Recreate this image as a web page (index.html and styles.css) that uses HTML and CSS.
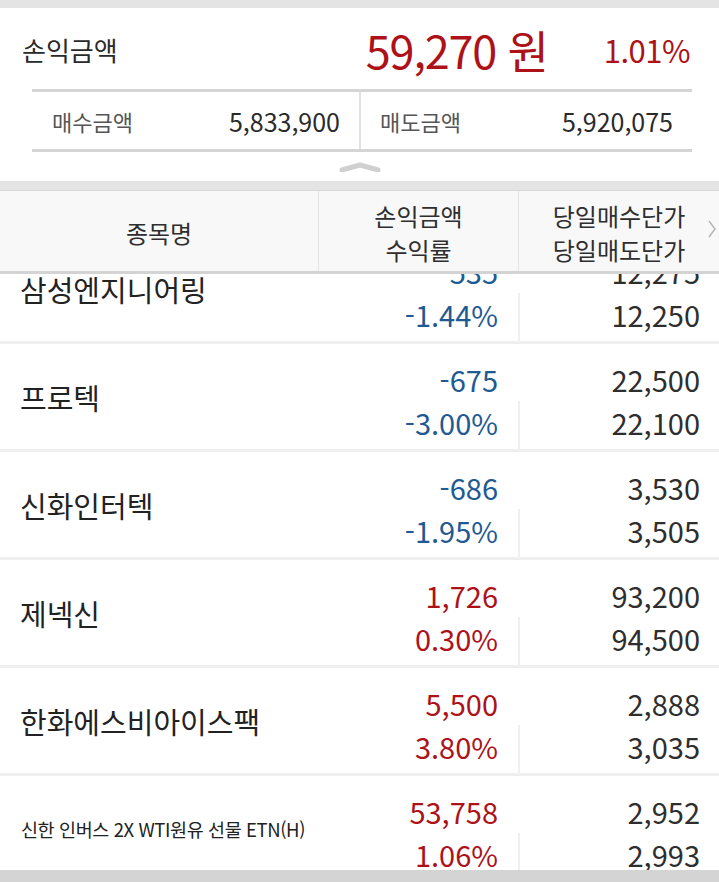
FILE: index.html
```html
<!DOCTYPE html>
<html lang="ko">
<head>
<meta charset="utf-8">
<link rel="stylesheet" href="styles.css">
</head>
<body>
<div class="top-band"></div>
<section class="summary">
  <div class="total">
    <span class="total-label">손익금액</span>
    <span class="total-amount">59,270 원</span>
    <span class="total-pct">1.01%</span>
  </div>
  <div class="sub">
    <div class="sub-cell left"><span class="sub-label">매수금액</span><span class="sub-value">5,833,900</span></div>
    <div class="sub-cell"><span class="sub-label">매도금액</span><span class="sub-value">5,920,075</span></div>
  </div>
  <div class="handle">
    <svg width="42" height="10" viewBox="0 0 42 10"><path d="M3 8 L21 3 L39 8" fill="none" stroke="#cfcfcf" stroke-width="5" stroke-linecap="round" stroke-linejoin="round"/></svg>
  </div>
</section>
<div class="mid-band"></div>
<div class="thead">
  <div class="th th-name">종목명</div>
  <div class="th th-mid"><span>손익금액</span><span>수익률</span></div>
  <div class="th th-last"><span>당일매수단가</span><span>당일매도단가</span>
    <svg class="more" width="10" height="20" viewBox="0 0 10 20"><path d="M2 2 L8 10 L2 18" fill="none" stroke="#b5b5b5" stroke-width="1.5"/></svg>
  </div>
</div>
<div class="list">
  <div class="list-inner">
    <div class="row">
      <div class="name">삼성엔지니어링</div>
      <div class="col2"><div class="l1 blue">-535</div><div class="l2 blue">-1.44%</div></div>
      <div class="col3"><div class="l1">12,275</div><div class="l2">12,250</div></div>
    </div>
    <div class="row">
      <div class="name">프로텍</div>
      <div class="col2"><div class="l1 blue">-675</div><div class="l2 blue">-3.00%</div></div>
      <div class="col3"><div class="l1">22,500</div><div class="l2">22,100</div></div>
    </div>
    <div class="row">
      <div class="name">신화인터텍</div>
      <div class="col2"><div class="l1 blue">-686</div><div class="l2 blue">-1.95%</div></div>
      <div class="col3"><div class="l1">3,530</div><div class="l2">3,505</div></div>
    </div>
    <div class="row">
      <div class="name">제넥신</div>
      <div class="col2"><div class="l1 red">1,726</div><div class="l2 red">0.30%</div></div>
      <div class="col3"><div class="l1">93,200</div><div class="l2">94,500</div></div>
    </div>
    <div class="row">
      <div class="name">한화에스비아이스팩</div>
      <div class="col2"><div class="l1 red">5,500</div><div class="l2 red">3.80%</div></div>
      <div class="col3"><div class="l1">2,888</div><div class="l2">3,035</div></div>
    </div>
    <div class="row">
      <div class="name small">신한 인버스 2X WTI원유 선물 ETN(H)</div>
      <div class="col2"><div class="l1 red">53,758</div><div class="l2 red">1.06%</div></div>
      <div class="col3"><div class="l1">2,952</div><div class="l2">2,993</div></div>
    </div>
  </div>
</div>
<div class="bottom-band"></div>
</body>
</html>
```
FILE: styles.css
```css
* { box-sizing: border-box; }
html, body { margin: 0; padding: 0; }
body {
  width: 719px;
  height: 882px;
  overflow: hidden;
  background: #fff;
  font-family: "Noto Sans CJK KR", "Noto Sans", sans-serif;
  color: #2a2a2a;
}
.top-band { height: 8px; background: #e4e4e4; }
.summary { background: #fff; height: 173px; }
.total {
  display: flex;
  align-items: center;
  height: 81px;
  padding: 2px 29px 0 22px;
}
.total-label { flex: 1; font-size: 26px; color: #2a2a2a; }
.total-amount { font-size: 45px; color: #ad1219; letter-spacing: -1.2px; }
.total-pct { font-size: 31px; color: #ad1219; margin-left: 56px; letter-spacing: -0.5px; }
.sub {
  margin: 0 27px 0 32px;
  border-top: 3px solid #d5d5d5;
  border-bottom: 3px solid #d5d5d5;
  display: grid;
  grid-template-columns: 329px 1fr;
  height: 63px;
}
.sub-cell {
  display: flex;
  align-items: center;
  justify-content: space-between;
  padding: 0 19px 0 19px;
}
.sub-cell.left { padding-left: 20px; padding-right: 19px; border-right: 2px solid #e2e2e2; }
.sub-label { font-size: 22px; color: #555; }
.sub-value { font-size: 25px; color: #2a2a2a; }
.handle { display: flex; justify-content: center; padding-top: 10px; }
.mid-band { height: 10px; background: #e4e4e4; border-bottom: 1px solid #d8d8d8; }
.thead {
  display: grid;
  grid-template-columns: 318px 200px 201px;
  height: 83px;
  background: #f8f8f8;
  border-bottom: 3px solid #d3d3d3;
}
.th {
  display: flex;
  flex-direction: column;
  align-items: center;
  justify-content: center;
  padding-top: 4px;
  font-size: 24px;
  line-height: 34px;
  color: #2e2e2e;
}
.th-mid, .th-last { border-left: 1px solid #e3e3e3; }
.th-last { position: relative; }
.more { position: absolute; right: 2px; top: 28px; }
.list { height: 596px; overflow: hidden; }
.list-inner { margin-top: -38px; }
.row {
  display: grid;
  grid-template-columns: 318px 200px 201px;
  height: 108px;
  border-bottom: 3px solid #efefef;
}
.name {
  display: flex;
  align-items: center;
  padding-left: 20px;
  font-size: 29px;
  color: #222;
  white-space: nowrap;
}
.name.small { font-size: 18.5px; padding-left: 21px; letter-spacing: -0.4px; }
.col2, .col3 { display: flex; flex-direction: column; padding-top: 14px; }
.l1, .l2 {
  text-align: right;
  font-size: 29px;
  line-height: 43px;
  color: #2e2e2e;
}
.col2 .l1, .col2 .l2 { padding-right: 20px; }
.col3 .l1, .col3 .l2 { padding-right: 19px; }
.col3 .l2 { flex: 1; border-left: 2px solid #efefef; }
.blue { color: #1f5a92 !important; }
.red { color: #ad1219 !important; }
.bottom-band { height: 12px; background: #d4d4d4; }
```
